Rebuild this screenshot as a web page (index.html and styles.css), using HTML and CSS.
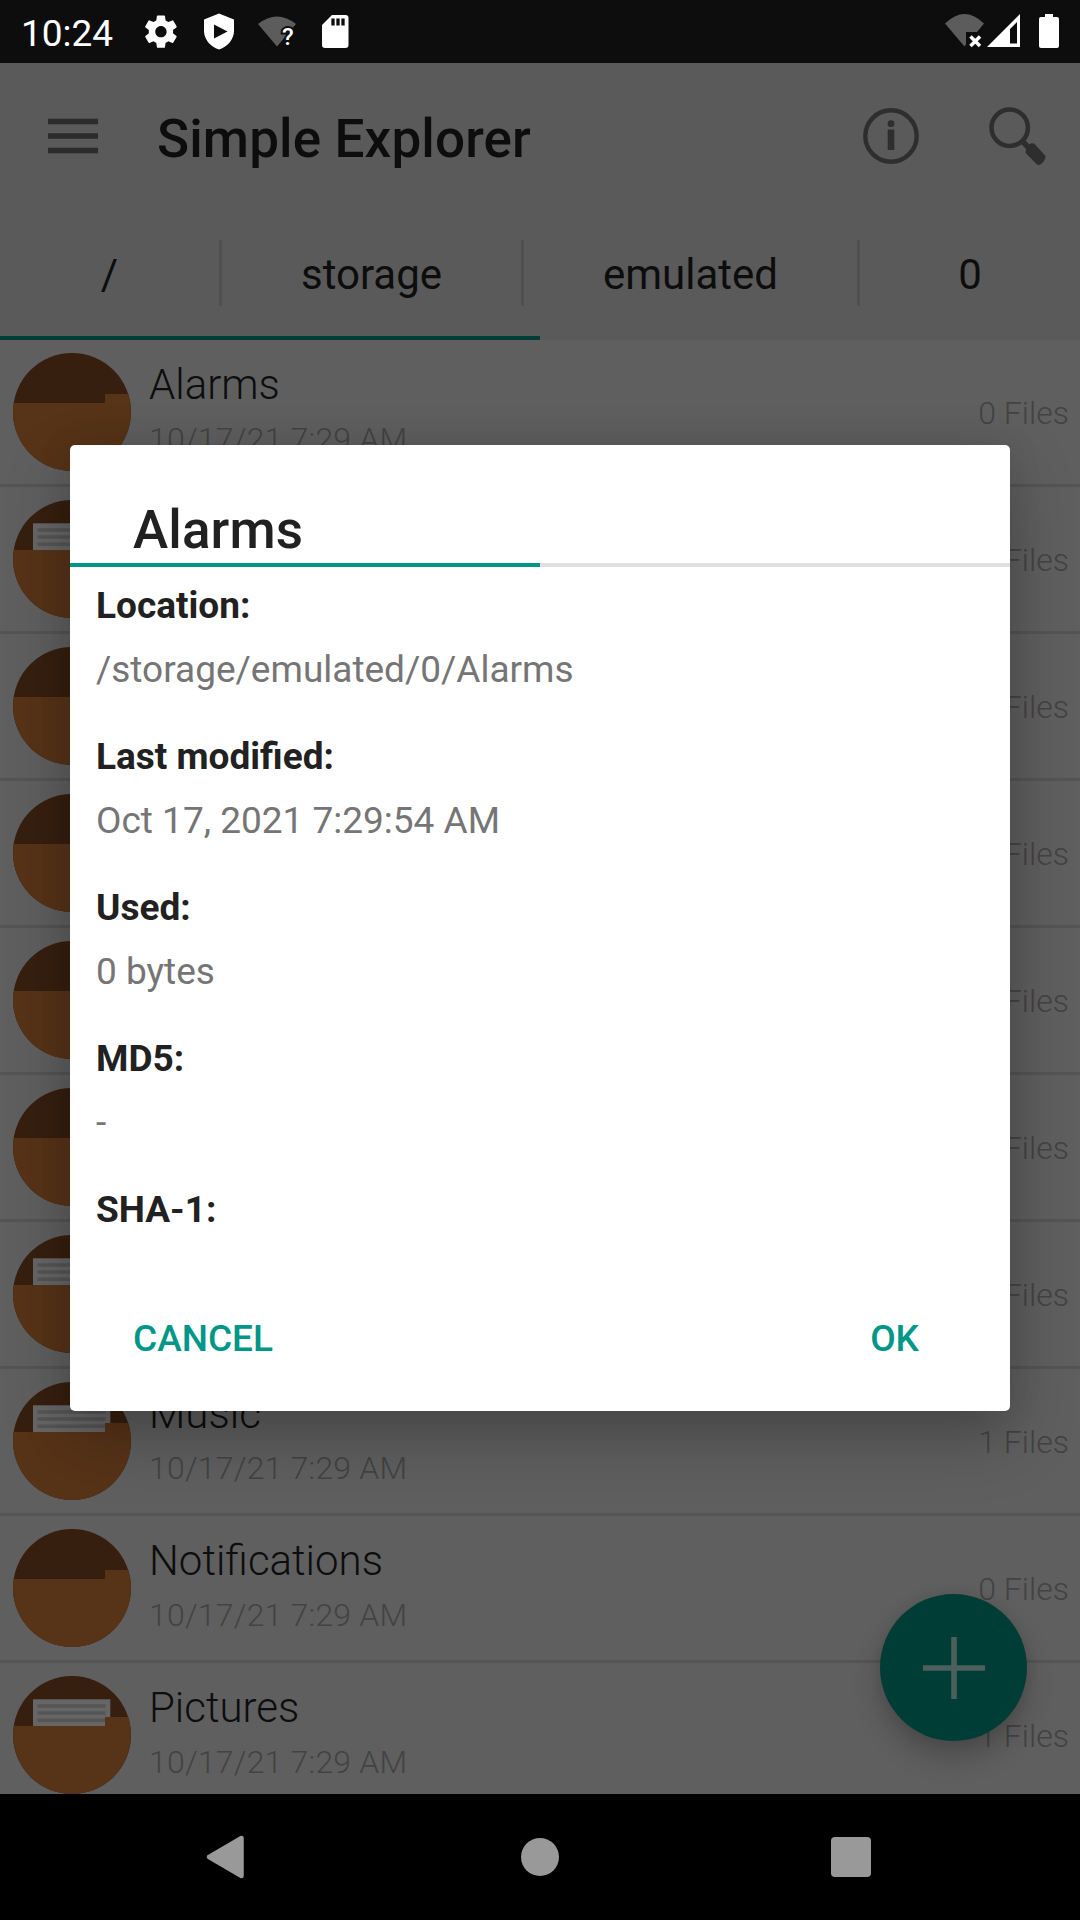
FILE: index.html
```html
<!DOCTYPE html>
<html lang="en">
<head>
<meta charset="utf-8">
<title>Simple Explorer</title>
<link rel="stylesheet" href="styles.css">
</head>
<body>
<svg class="defs" aria-hidden="true">
  <defs>
    <clipPath id="disc"><circle cx="59" cy="59" r="59"/></clipPath>
    <symbol id="folder" viewBox="0 0 118 118">
      <g clip-path="url(#disc)">
        <rect width="118" height="118" fill="#361f0f"/>
        <path d="M0 50H92V41H118V118H0z" fill="#573317"/>
      </g>
    </symbol>
    <symbol id="folder-full" viewBox="0 0 118 118">
      <g clip-path="url(#disc)">
        <rect width="118" height="118" fill="#361f0f"/>
        <rect x="20" y="23.3" width="77.3" height="30" fill="#666"/>
        <path d="M24.500 30H92.500M24.500 37H92.500M24.500 44.300H92.500" stroke="#555" stroke-width="3.600"/>
        <path d="M0 50H92V41H118V118H0z" fill="#573317"/>
      </g>
    </symbol>
  </defs>
</svg>
<div class="screen">
  <header class="status">
    <span class="clock">10:24</span>
    <svg class="s-icons" width="210" height="63" viewBox="0 0 210 63">
      <g transform="translate(3.500 12.200) scale(1.62)" fill="#fff"><path d="M19.430 12.980c.040-.320.070-.640.070-.980s-.030-.660-.070-.980l2.110-1.650c.190-.150.240-.420.120-.640l-2-3.460c-.120-.220-.390-.300-.610-.220l-2.490 1c-.520-.400-1.080-.730-1.690-.980l-.380-2.650C14.460 2.180 14.250 2 14 2h-4c-.250 0-.460.180-.490.420l-.380 2.650c-.610.250-1.170.590-1.690.980l-2.490-1c-.230-.090-.490 0-.610.220l-2 3.460c-.130.220-.070.490.120.640l2.110 1.650c-.040.320-.070.650-.070.980s.030.660.070.980l-2.110 1.650c-.190.150-.240.420-.120.640l2 3.460c.120.220.390.300.610.220l2.490-1c.520.400 1.080.730 1.690.980l.380 2.650c.030.240.240.420.490.420h4c.250 0 .460-.180.490-.420l.380-2.650c.610-.250 1.170-.590 1.690-.980l2.490 1c.230.090.490 0 .610-.220l2-3.460c.120-.220.070-.490-.120-.640l-2.110-1.650zM12 15.500c-1.930 0-3.500-1.570-3.500-3.500s1.570-3.500 3.500-3.500 3.500 1.570 3.500 3.500-1.570 3.500-3.500 3.500z"/></g>
      <path fill="#fff" fill-rule="evenodd" d="M81 13.500L96 19.500V31C96 39 90 46.500 81 49.500C72 46.500 66 39 66 31V19.500zM76 24.500V38.500L89.500 31.500z"/>
      <path d="M120 24Q139 9 158 24L139 46.500z" fill="#5c5c5c"/>
      <text x="144" y="45" class="wifi-mark">?</text>
      <path fill="#fff" fill-rule="evenodd" d="M194 15H207.500Q210.500 15 210.500 18V45Q210.500 48 207.500 48H187Q184 48 184 45V25z" />
      <path d="M195 18.500v7M200 18.500v7M205 18.500v7" stroke="#0d0d0d" stroke-width="3.300"/>
    </svg>
    <svg class="s-right" width="120" height="63" viewBox="0 0 120 63">
      <path d="M5 23.500Q24.500 4.500 44 23.500L37 32H26V44L24.500 46.500z" fill="#5c5c5c"/>
      <path d="M30.500 36.500L40 46M40 36.500L30.500 46" stroke="#fff" stroke-width="3.500"/>
      <path fill="#fff" fill-rule="evenodd" d="M80 14V47H47zM70 29V43.500H77V22z"/>
      <path fill="#fff" d="M105 14H113V17H117Q119 17 119 19V46Q119 48 117 48H101Q99 48 99 46V19Q99 17 101 17H105z"/>
    </svg>
  </header>

  <main class="app">
    <div class="toolbar">
      <svg width="50" height="36" viewBox="0 0 50 36"><path d="M0 3.500H50M0 18H50M0 32.500H50" stroke="#2b2b2b" stroke-width="5.500"/></svg>
      <h1 class="app-title">Simple Explorer</h1>
      <svg class="info" width="58" height="58" viewBox="0 0 58 58">
        <circle cx="29" cy="29" r="25.700" fill="none" stroke="#2e2e2e" stroke-width="4.400"/>
        <circle cx="29" cy="16.700" r="3.400" fill="#2e2e2e"/><path d="M29 22.500V43" stroke="#2e2e2e" stroke-width="6.600"/>
      </svg>
      <svg width="60" height="60" viewBox="0 0 60 60">
        <circle cx="21.700" cy="21.700" r="18.200" fill="none" stroke="#2e2e2e" stroke-width="4.500"/>
        <path d="M34 35L42 43" stroke="#2e2e2e" stroke-width="5.500"/>
        <path d="M39.500 41L43.500 38.700L45.500 39L56 50.500Q55.500 55 51 57.500L49.500 57L39.200 46.500z" fill="#2e2e2e" stroke="#2e2e2e" stroke-width="3" stroke-linejoin="round"/>
      </svg>
    </div>
    <nav class="crumbs">
      <span class="crumb c-root">/</span><i class="sep"></i>
      <span class="crumb c-storage">storage</span><i class="sep"></i>
      <span class="crumb c-emulated">emulated</span><i class="sep"></i>
      <span class="crumb c-zero">0</span>
    </nav>
    <div class="progress"></div>
    <div class="list">
      <div class="row"><svg class="disc"><use href="#folder"/></svg><div class="meta"><div class="name">Alarms</div><div class="date">10/17/21 7:29 AM</div></div><div class="count">0 Files</div></div>
      <div class="row"><svg class="disc"><use href="#folder-full"/></svg><div class="meta"><div class="name">Android</div><div class="date">10/17/21 7:29 AM</div></div><div class="count">3 Files</div></div>
      <div class="row"><svg class="disc"><use href="#folder"/></svg><div class="meta"><div class="name">Audiobooks</div><div class="date">10/17/21 7:29 AM</div></div><div class="count">0 Files</div></div>
      <div class="row"><svg class="disc"><use href="#folder"/></svg><div class="meta"><div class="name">DCIM</div><div class="date">10/17/21 7:29 AM</div></div><div class="count">0 Files</div></div>
      <div class="row"><svg class="disc"><use href="#folder"/></svg><div class="meta"><div class="name">Documents</div><div class="date">10/17/21 7:29 AM</div></div><div class="count">0 Files</div></div>
      <div class="row"><svg class="disc"><use href="#folder"/></svg><div class="meta"><div class="name">Download</div><div class="date">10/17/21 7:29 AM</div></div><div class="count">0 Files</div></div>
      <div class="row"><svg class="disc"><use href="#folder-full"/></svg><div class="meta"><div class="name">Movies</div><div class="date">10/17/21 7:29 AM</div></div><div class="count">1 Files</div></div>
      <div class="row"><svg class="disc"><use href="#folder-full"/></svg><div class="meta"><div class="name">Music</div><div class="date">10/17/21 7:29 AM</div></div><div class="count">1 Files</div></div>
      <div class="row"><svg class="disc"><use href="#folder"/></svg><div class="meta"><div class="name">Notifications</div><div class="date">10/17/21 7:29 AM</div></div><div class="count">0 Files</div></div>
      <div class="row"><svg class="disc"><use href="#folder-full"/></svg><div class="meta"><div class="name">Pictures</div><div class="date">10/17/21 7:29 AM</div></div><div class="count">1 Files</div></div>
    </div>
    <div class="fab"><svg width="62" height="62" viewBox="0 0 62 62"><path d="M0 31H62M31 0V62" stroke="#4d5f5c" stroke-width="5.600"/></svg></div>
  </main>

  <footer class="navbar">
    <svg width="1080" height="126" viewBox="0 0 1080 126" fill="#999">
      <path d="M209 63L241.500 44V82z" stroke="#999" stroke-width="4.500" stroke-linejoin="round"/>
      <circle cx="540" cy="63" r="19"/>
      <rect x="831" y="43" width="40" height="40" rx="4"/>
    </svg>
  </footer>

  <section class="dialog" role="dialog">
    <h2 class="dialog-title">Alarms</h2>
    <div class="dialog-rule"></div>
    <dl class="props">
      <dt>Location:</dt><dd>/storage/emulated/0/Alarms</dd>
      <dt>Last modified:</dt><dd>Oct 17, 2021 7:29:54 AM</dd>
      <dt>Used:</dt><dd>0 bytes</dd>
      <dt>MD5:</dt><dd>-</dd>
      <dt>SHA-1:</dt>
    </dl>
    <div class="actions"><span>CANCEL</span><span>OK</span></div>
  </section>
</div>
</body>
</html>
```
FILE: styles.css
```css
* { box-sizing: border-box; }
body { margin: 0; font-family: Roboto, sans-serif; background: #000; }
h1, h2, dl, dd { margin: 0; }
svg { display: block; flex: none; }
.defs { position: absolute; width: 0; height: 0; }

.screen {
  position: relative;
  width: 1080px;
  height: 1920px;
  overflow: hidden;
  display: flex;
  flex-direction: column;
}

.status {
  height: 63px;
  flex: none;
  display: flex;
  background: #0d0d0d;
  color: #fff;
}
.clock { width: 138px; padding-left: 21px; font-size: 37px; line-height: 67px; }
.s-icons { overflow: visible; }
.s-right { margin-left: auto; margin-right: 20px; }
.wifi-mark { font-size: 24px; font-weight: 500; fill: #fff; stroke: #0d0d0d; stroke-width: 4px; paint-order: stroke; }

.app {
  position: relative;
  flex: 1;
  min-height: 0;
  display: flex;
  flex-direction: column;
  overflow: hidden;
  background: #5f5f5f;
}
.toolbar {
  height: 147px;
  flex: none;
  display: flex;
  align-items: center;
  padding: 0 32px 1px 48px;
  background: #5a5a5a;
}
.app-title {
  flex: 1;
  margin-left: 59px;
  padding-top: 5px;
  font-size: 53px;
  font-weight: 500;
  letter-spacing: .13px;
  color: #0d0d0d;
}
.info { margin-right: 68px; }

.crumbs {
  height: 126px;
  flex: none;
  display: flex;
  align-items: center;
  background: #5a5a5a;
  font-size: 42px;
  color: #0d0d0d;
}
.crumb { padding-top: 3px; text-align: center; }
.c-root { width: 219px; }
.c-storage { width: 299px; }
.c-emulated { width: 333px; }
.c-zero { width: 220px; }
.sep { width: 3px; height: 66px; background: #505050; }
.progress { height: 4px; flex: none; background: linear-gradient(90deg, #003d36 50%, #5a5a5a 50%); }

.list { flex: 1; min-height: 0; overflow: hidden; }
.row {
  height: 147px;
  display: flex;
  align-items: flex-start;
  padding: 0 11px 0 13px;
  border-bottom: 3px solid #545454;
}
.disc { width: 118px; height: 118px; margin-top: 13px; }
.meta { flex: 1; padding: 20px 0 0 18px; font-weight: 300; }
.name { font-size: 42px; line-height: 49px; color: #0d0d0d; }
.date { margin-top: 12px; font-size: 32px; line-height: 37px; letter-spacing: .2px; color: #434343; }
.count { font-size: 32px; font-weight: 300; line-height: 147px; color: #434343; }

.fab {
  position: absolute;
  right: 53px;
  bottom: 53px;
  width: 147px;
  height: 147px;
  border-radius: 50%;
  display: flex;
  align-items: center;
  justify-content: center;
  background: #003d36;
  box-shadow: 0 16px 28px rgba(0, 0, 0, .22), 0 0 12px rgba(0, 0, 0, .08);
}

.navbar { height: 126px; flex: none; background: #000; }

.dialog {
  position: absolute;
  left: 70px;
  top: 445px;
  width: 940px;
  height: 966px;
  display: flex;
  flex-direction: column;
  border-radius: 5px;
  background: #fff;
  box-shadow: 0 26px 64px rgba(0, 0, 0, .25), 0 0 36px rgba(0, 0, 0, .08);
}
.dialog-title {
  padding: 54px 63px 2px;
  font-size: 53px;
  line-height: 62px;
  font-weight: 500;
  letter-spacing: .13px;
  color: #212121;
}
.dialog-rule { height: 4px; background: linear-gradient(90deg, #009688 50%, #e0e0e0 50%); }
.props { padding: 17px 26px 0; font-size: 37px; line-height: 43px; }
.props dt { font-weight: 700; color: #212121; }
.props dd { margin: 21px 0 44px; color: #757575; }
.actions {
  margin-top: auto;
  display: flex;
  justify-content: space-between;
  padding: 0 91px 51px 63px;
  font-size: 37px;
  line-height: 43px;
  font-weight: 500;
  color: #009688;
}
```
